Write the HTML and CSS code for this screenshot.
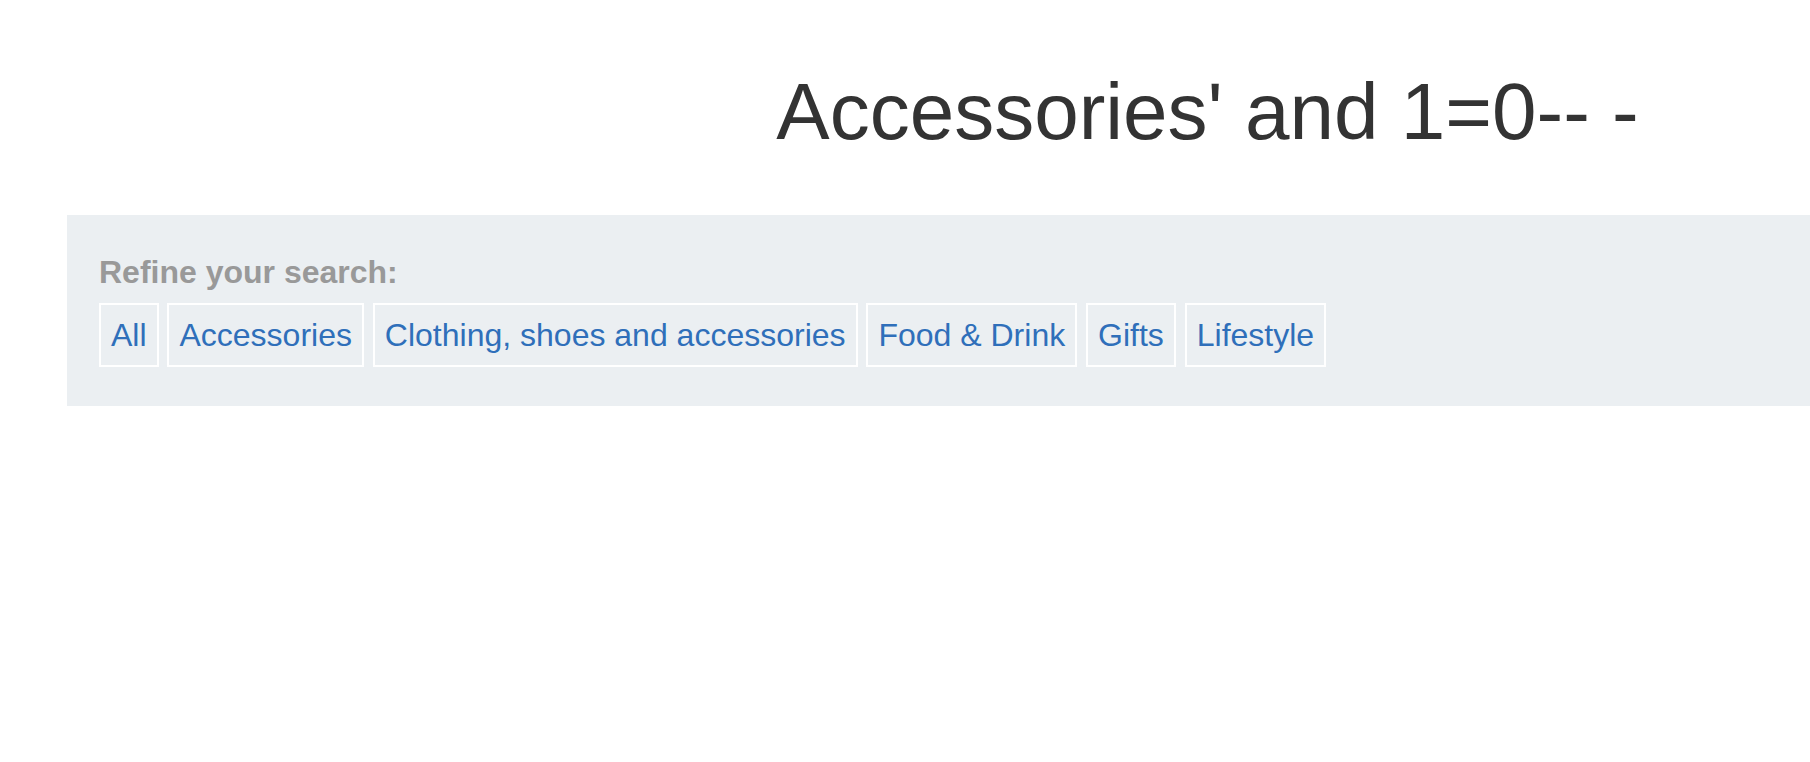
FILE: index.html
```html
<!DOCTYPE html>
<html lang="en">
<head>
<meta charset="utf-8">
<title>Accessories' and 1=0-- -</title>
<link rel="stylesheet" href="styles.css">
</head>
<body>
<div class="page">
  <h1 class="title">Accessories' and 1=0-- -</h1>
  <div class="refine">
    <div class="refine-label">Refine your search:</div>
    <div class="refine-list">
      <a class="tag" href="#">All</a>
      <a class="tag" href="#">Accessories</a>
      <a class="tag" href="#">Clothing, shoes and accessories</a>
      <a class="tag" href="#">Food &amp; Drink</a>
      <a class="tag" href="#">Gifts</a>
      <a class="tag" href="#">Lifestyle</a>
    </div>
  </div>
</div>
</body>
</html>
```

FILE: styles.css
```css
html, body {
  margin: 0;
  padding: 0;
  overflow: hidden;
  background: #ffffff;
}

body {
  font-family: "Liberation Sans", Arial, Helvetica, sans-serif;
  font-size: 32px;
  line-height: 46px;
  color: #333333;
}

.page {
  margin-left: 67px;
}

.title {
  margin: 68px 0 59px;
  padding-left: 538px;
  font-size: 80px;
  line-height: 88px;
  font-weight: normal;
  text-align: center;
  white-space: nowrap;
  color: #333333;
}

.refine {
  background: #ebeff2;
  padding: 34px 32px 39px;
}

.refine-label {
  font-weight: bold;
  color: #999999;
  margin-bottom: 8px;
}

.refine-list {
  line-height: 46px;
}

.tag {
  display: inline-block;
  padding: 7px 10px;
  border: 2px solid #ffffff;
  color: #2f6fba;
  text-decoration: none;
}
```
